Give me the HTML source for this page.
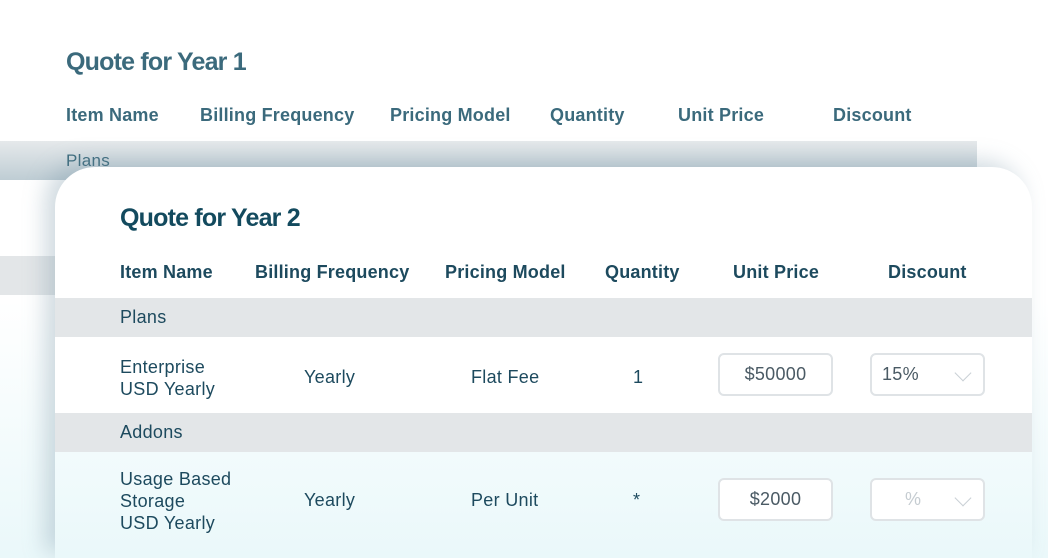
<!DOCTYPE html>
<html style="overflow:hidden;height:558px"><head><meta charset="utf-8"><style>
*{margin:0;padding:0;box-sizing:border-box}
html,body{width:1048px;height:558px;overflow:hidden}
body{position:relative;font-family:"Liberation Sans",sans-serif;background:linear-gradient(#fff 0,#fff 300px,#eaf8fa 558px);color:#1d4a5e}
.abs{position:absolute}
h1{position:absolute;font-size:25px;font-weight:bold;letter-spacing:-0.8px;color:#3b6a7c}
.hd{position:absolute;font-size:18px;font-weight:bold;white-space:nowrap;letter-spacing:0.2px}
.t{position:absolute;font-size:18px;white-space:nowrap;line-height:22px;letter-spacing:0.3px}
.card{position:absolute;left:55px;top:167px;width:977px;height:391px;background:#fff;border-radius:40px 40px 0 0;box-shadow:-10px -6px 22px rgba(120,150,165,.35);overflow:hidden}
.box{position:absolute;height:43px;border:2px solid #dfe3e6;border-radius:6px;background:#fff;font-size:18px;color:#4a5a64;line-height:39px;letter-spacing:0.3px}
.chev{position:absolute;right:14px;top:12px;width:12px;height:12px;border-right:1.5px solid #c9d0d5;border-bottom:1.5px solid #c9d0d5;transform:rotate(45deg)}
</style></head><body>
<h1 style="left:66px;top:48px">Quote for Year 1</h1>
<div style="color:#3b6a7c">
<div class="hd" style="left:66px;top:105px">Item Name</div>
<div class="hd" style="left:200px;top:105px">Billing Frequency</div>
<div class="hd" style="left:390px;top:105px">Pricing Model</div>
<div class="hd" style="left:550px;top:105px">Quantity</div>
<div class="hd" style="left:678px;top:105px">Unit Price</div>
<div class="hd" style="left:833px;top:105px">Discount</div>
</div>
<div class="abs" style="left:0;top:141px;width:977px;height:39px;background:linear-gradient(#e6e9eb,#bfcdd4)"></div>
<div class="t" style="left:66px;top:150px;color:#3b6a7c;font-size:17px">Plans</div>
<div class="abs" style="left:0;top:256px;width:60px;height:39px;background:#e3e6e8"></div>
<div class="card">
<h1 style="left:65px;top:37px;color:#134a5e">Quote for Year 2</h1>
<div class="hd" style="left:65px;top:95px">Item Name</div>
<div class="hd" style="left:200px;top:95px">Billing Frequency</div>
<div class="hd" style="left:390px;top:95px">Pricing Model</div>
<div class="hd" style="left:550px;top:95px">Quantity</div>
<div class="hd" style="left:678px;top:95px">Unit Price</div>
<div class="hd" style="left:833px;top:95px">Discount</div>
<div class="abs" style="left:0;top:131px;width:977px;height:39px;background:#e3e6e8"></div>
<div class="t" style="left:65px;top:139px">Plans</div>
<div class="t" style="left:65px;top:189px">Enterprise<br>USD Yearly</div>
<div class="t" style="left:249px;top:199px">Yearly</div>
<div class="t" style="left:416px;top:199px">Flat Fee</div>
<div class="t" style="left:578px;top:199px">1</div>
<div class="box" style="left:663px;top:186px;width:115px;text-align:center">$50000</div>
<div class="box" style="left:815px;top:186px;width:115px;padding-left:10px">15%<div class="chev"></div></div>
<div class="abs" style="left:0;top:246px;width:977px;height:39px;background:#e3e6e8"></div>
<div class="t" style="left:65px;top:254px">Addons</div>
<div class="abs" style="left:0;top:285px;width:977px;height:106px;background:linear-gradient(#f2fbfc,#eaf8fa)"></div>
<div class="t" style="left:65px;top:301px">Usage Based<br>Storage<br>USD Yearly</div>
<div class="t" style="left:249px;top:322px">Yearly</div>
<div class="t" style="left:416px;top:322px">Per Unit</div>
<div class="t" style="left:578px;top:322px">*</div>
<div class="box" style="left:663px;top:311px;width:115px;text-align:center">$2000</div>
<div class="box" style="left:815px;top:311px;width:115px;padding-left:33px;color:#c5ccd1">%<div class="chev"></div></div>
</div>
</body></html>
